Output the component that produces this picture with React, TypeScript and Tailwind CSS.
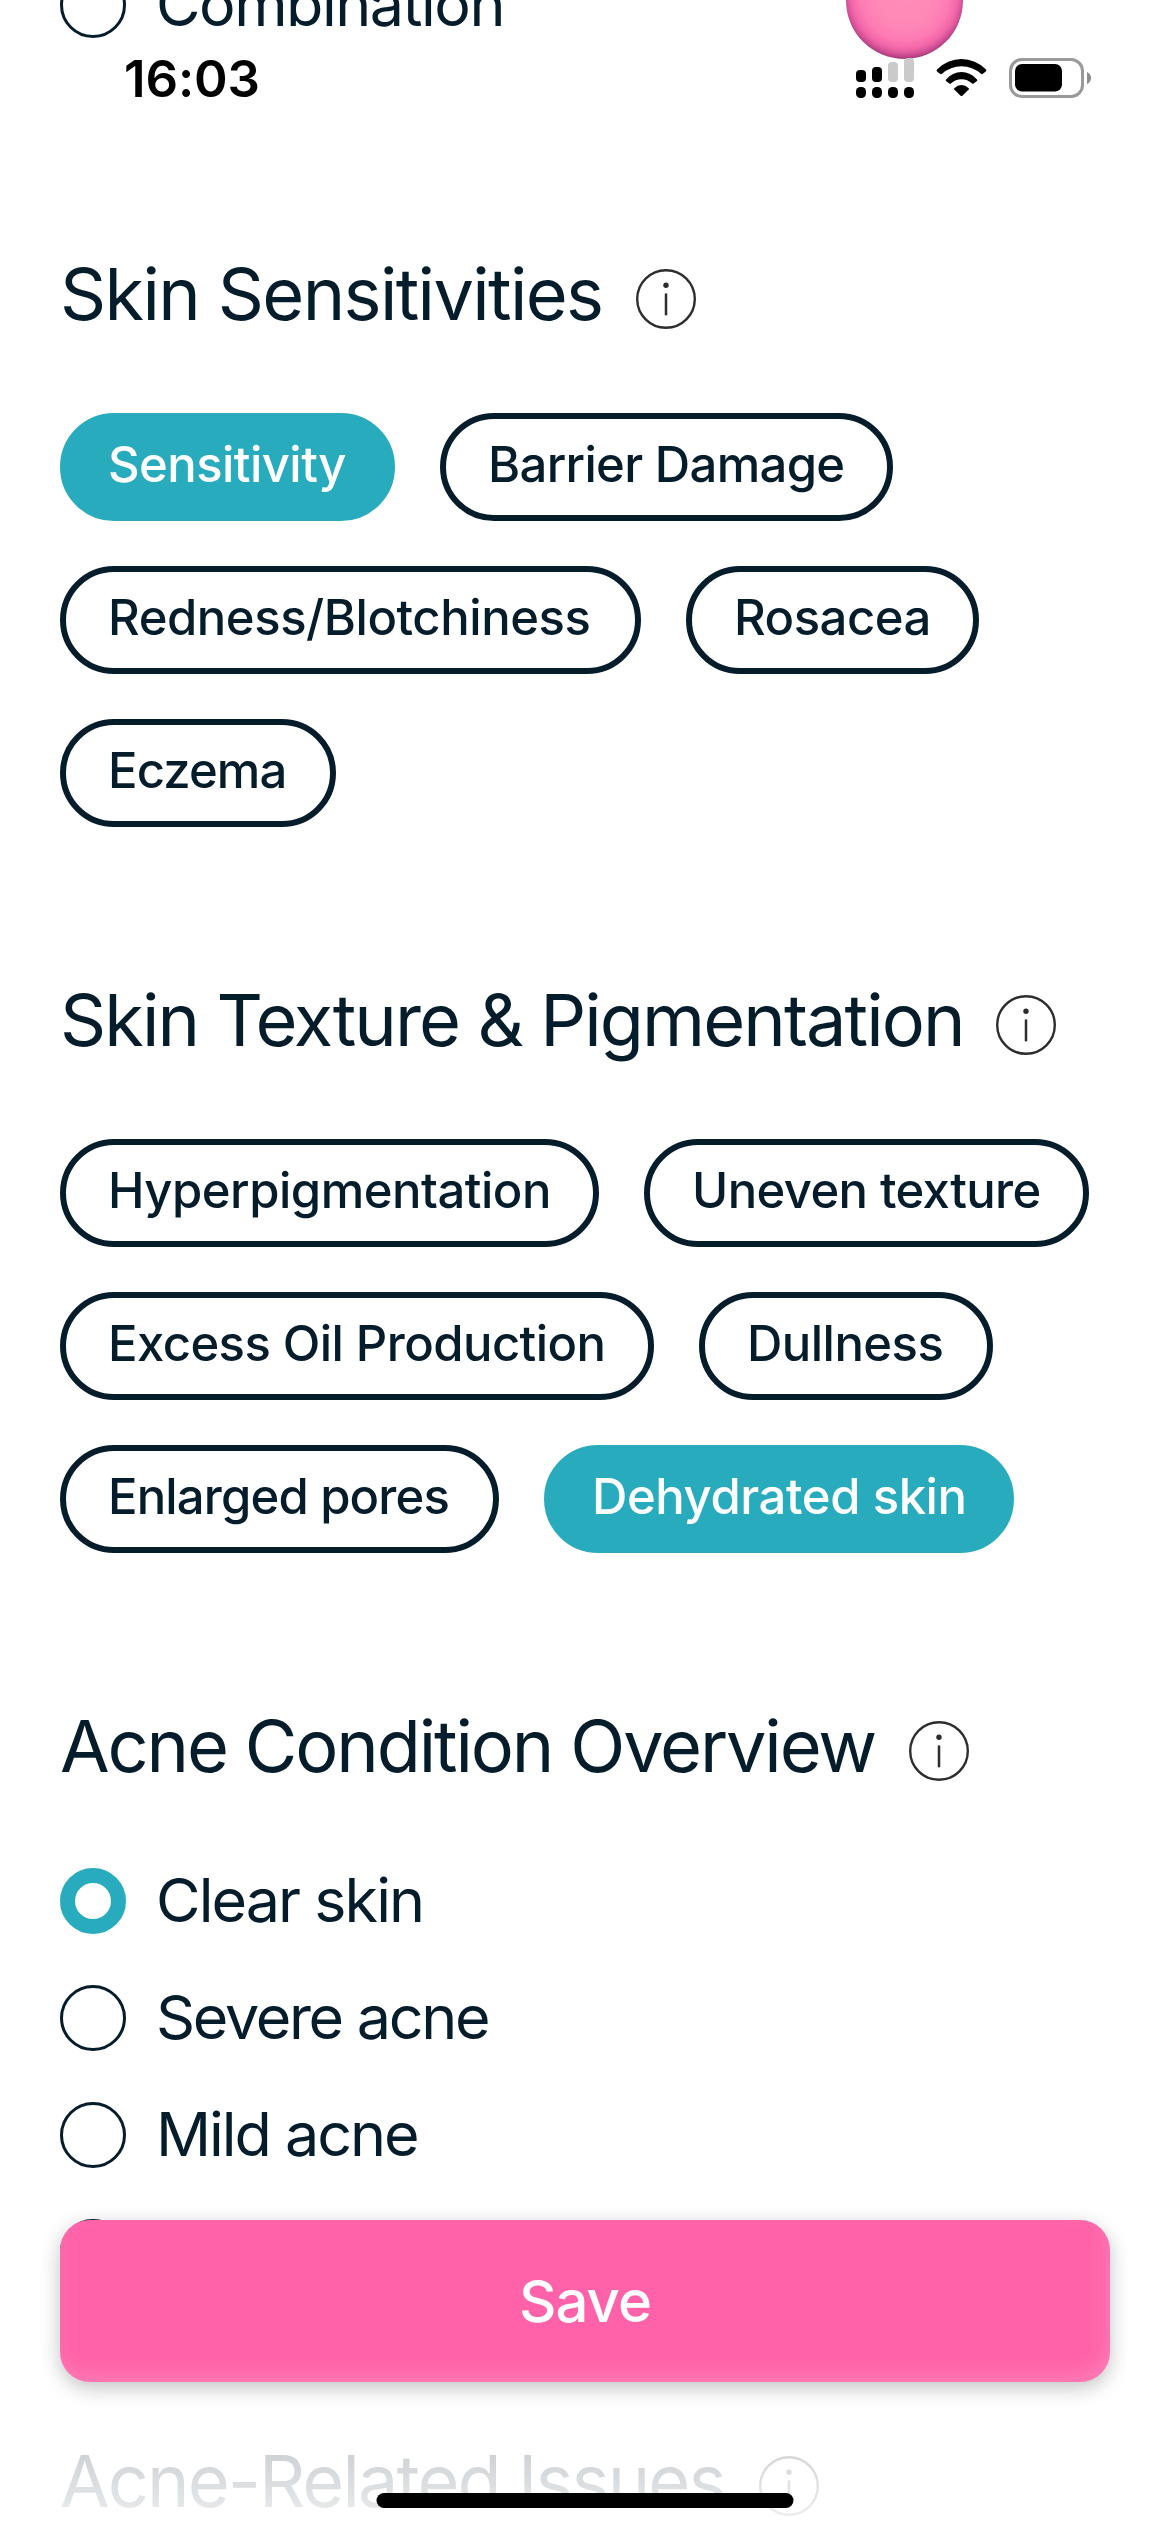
import React, { useState } from 'react';
import { clsx } from 'clsx';

type Option = { label: string; className: string };

const sensitivities: Option[] = [
  { label: 'Sensitivity', className: 'w-[335px] tracking-[-0.56px]' },
  { label: 'Barrier Damage', className: 'w-[453px] tracking-[-0.68px]' },
  { label: 'Redness/Blotchiness', className: 'w-[581px] tracking-[-0.44px]' },
  { label: 'Rosacea', className: 'w-[293px] tracking-[-0.49px]' },
  { label: 'Eczema', className: 'w-[276px] tracking-[-0.88px]' },
];

const textures: Option[] = [
  { label: 'Hyperpigmentation', className: 'w-[539px] tracking-[-0.49px]' },
  { label: 'Uneven texture', className: 'w-[445px] tracking-[-0.61px]' },
  { label: 'Excess Oil Production', className: 'w-[594px] tracking-[-0.56px]' },
  { label: 'Dullness', className: 'w-[294px] tracking-[-0.53px]' },
  { label: 'Enlarged pores', className: 'w-[439px] tracking-[-0.84px]' },
  { label: 'Dehydrated skin', className: 'w-[470px] tracking-[-0.42px]' },
];

const acneLevels: Option[] = [
  { label: 'Clear skin', className: 'tracking-[-1.92px]' },
  { label: 'Severe acne', className: 'tracking-[-2.3px]' },
  { label: 'Mild acne', className: 'tracking-[-2.04px]' },
];

function InfoIcon() {
  return (
    <svg viewBox="0 0 60 60" className="h-[60px] w-[60px] shrink-0" fill="none" stroke="#2d2d2d">
      <circle cx="30" cy="30" r="28.8" strokeWidth="2.4" />
      <circle cx="30" cy="16.3" r="2.7" fill="#2d2d2d" stroke="none" />
      <path d="M30 25.5v19.8" strokeWidth="2.5" strokeLinecap="round" />
    </svg>
  );
}

function SectionTitle({ title, className }: { title: string; className: string }) {
  return (
    <div className="flex h-[60px] items-start">
      <h2 className={clsx('shrink-0 text-[72px] leading-[50px] whitespace-nowrap', className)}>{title}</h2>
      <InfoIcon />
    </div>
  );
}

function Chips({ options, initial }: { options: Option[]; initial: string }) {
  const [selected, setSelected] = useState([initial]);

  const toggle = (label: string) =>
    setSelected((prev) => (prev.includes(label) ? prev.filter((l) => l !== label) : [...prev, label]));

  return (
    <div className="mt-[84px] flex flex-wrap gap-[45px]">
      {options.map(({ label, className }) => (
        <button
          key={label}
          onClick={() => toggle(label)}
          className={clsx(
            'h-[108px] rounded-full border-[6px] pb-1 pl-[42px] text-left text-[49px] leading-[92px] font-medium whitespace-nowrap',
            selected.includes(label) ? 'border-[#29abbe] bg-[#29abbe] text-white' : 'border-[#051c2b]',
            className
          )}
        >
          {label}
        </button>
      ))}
    </div>
  );
}

function RadioCircle({ checked }: { checked?: boolean }) {
  return (
    <span
      className={clsx(
        'block h-[66px] w-[66px] shrink-0 rounded-full',
        checked ? 'border-[15px] border-[#29abbe]' : 'border-[3px] border-[#051c2b]'
      )}
    />
  );
}

function Radio({ option, checked, onSelect }: { option: Option; checked?: boolean; onSelect?: () => void }) {
  return (
    <button onClick={onSelect} className="flex h-[66px] items-start gap-[30px]">
      <RadioCircle checked={checked} />
      <span className={clsx('text-[61px] leading-[64px] whitespace-nowrap', option.className)}>{option.label}</span>
    </button>
  );
}

function StatusBar() {
  return (
    <div className="absolute inset-x-0 top-0 flex h-[156px] items-center justify-between pr-[79px] pl-[124px] text-black">
      <span className="text-[51px] leading-none font-semibold tracking-[-0.15px]">16:03</span>
      <svg viewBox="0 0 235 40" className="h-10 w-[235px]">
        {/* signal */}
        <g>
          <rect x="0" y="12" width="10" height="12" rx="4" />
          <rect x="16" y="9" width="10" height="15" rx="4" />
          <rect x="32" y="4" width="10" height="20" rx="4" fill="#cacaca" />
          <rect x="48" y="0" width="10" height="24" rx="4" fill="#cacaca" />
          <rect x="0" y="29" width="10" height="11" rx="4.5" />
          <rect x="16" y="29" width="10" height="11" rx="4.5" />
          <rect x="32" y="29" width="10" height="11" rx="4.5" />
          <rect x="48" y="29" width="10" height="11" rx="4.5" />
        </g>
        {/* wifi */}
        <path d="M82.4 14.7 80.9 13.2Q80.2 12.3 81 11.5Q91.5 1 105.5 1Q119.5 1 130 11.5Q130.8 12.3 130.1 13.2L126.5 16Q125.8 16.5 125 15.8Q116.5 8.2 105.5 8.2Q94.5 8.2 86 15.8Q85.2 16.5 84.5 16Z" />
        <path d="M90 21.5Q96.5 14 105.5 14Q114.5 14 121 21.5Q121.7 22.3 121 23L117.6 25.6Q116.9 26.1 116.2 25.5Q111.5 21.2 105.5 21.2Q99.5 21.2 94.8 25.5Q94.1 26.1 93.4 25.6L90 23Q89.3 22.3 90 21.5Z" />
        <path d="M98.3 30.2Q101.5 27 105.5 27Q109.5 27 112.7 30.2Q113.4 30.9 112.7 31.6L106.4 37.7Q105.5 38.5 104.6 37.7L98.3 31.6Q97.6 30.9 98.3 30.2Z" />
        {/* battery */}
        <rect x="154.5" y="1.5" width="72" height="37" rx="11.5" fill="none" stroke="#999" strokeWidth="3" />
        <rect x="159" y="6" width="47" height="27.5" rx="7" />
        <path d="M231 14q4 2 4 6t-4 6z" fill="#8c8c8c" />
      </svg>
    </div>
  );
}

export default function App() {
  const [acne, setAcne] = useState('Clear skin');

  return (
    <div className="relative h-[2532px] w-[1170px] overflow-hidden bg-white font-['Inter','Liberation_Sans',sans-serif] text-[#051c2b]">
      <main className="-mt-7 flex flex-col px-[60px]">
        <Radio option={{ label: 'Combination', className: 'tracking-[-1.49px]' }} />

        <section className="mt-[231px]">
          <SectionTitle title="Skin Sensitivities" className="w-[576px] tracking-[-1.64px]" />
          <Chips options={sensitivities} initial="Sensitivity" />
        </section>

        <section className="mt-[168px]">
          <SectionTitle title="Skin Texture & Pigmentation" className="w-[936px] tracking-[-1.9px]" />
          <Chips options={textures} initial="Dehydrated skin" />
        </section>

        <section className="mt-[168px]">
          <SectionTitle title="Acne Condition Overview" className="w-[849px] tracking-[-2.14px]" />
          <div className="mt-[87px] flex flex-col items-start gap-[51px]">
            {acneLevels.map((option) => (
              <Radio
                key={option.label}
                option={option}
                checked={acne === option.label}
                onSelect={() => setAcne(option.label)}
              />
            ))}
            <RadioCircle />
          </div>
        </section>

        <section className="mt-[171px]">
          <SectionTitle title="Acne-Related Issues" className="w-[699px] tracking-[-1.9px]" />
        </section>
      </main>

      {/* floating slider knob */}
      <div className="absolute -top-[58px] left-[846px] h-[117px] w-[117px] rounded-full bg-[radial-gradient(circle_62px_at_50%_46%,#ff8dba_0%,#ff87b7_50%,#fd7ab3_72%,#f266a8_86%,#d04f95_95%,#b04080_100%)]" />

      <StatusBar />

      {/* content fades out below the save button */}
      <div className="absolute inset-x-0 bottom-0 h-[150px] bg-linear-to-b from-white/68 to-white/94" />
      <div className="absolute inset-x-[60px] bottom-[150px]">
        <button className="h-[162px] w-full rounded-[30px] bg-[#ff62a8] text-center text-[58px] font-medium tracking-[-0.91px] text-white shadow-[0_6px_20px_rgba(0,0,0,0.24),inset_-4px_-8px_18px_rgba(255,255,255,0.16)]">
          Save
        </button>
      </div>
      <div className="absolute bottom-6 left-1/2 h-[15px] w-[417px] -translate-x-1/2 rounded-full bg-black" />
    </div>
  );
}
